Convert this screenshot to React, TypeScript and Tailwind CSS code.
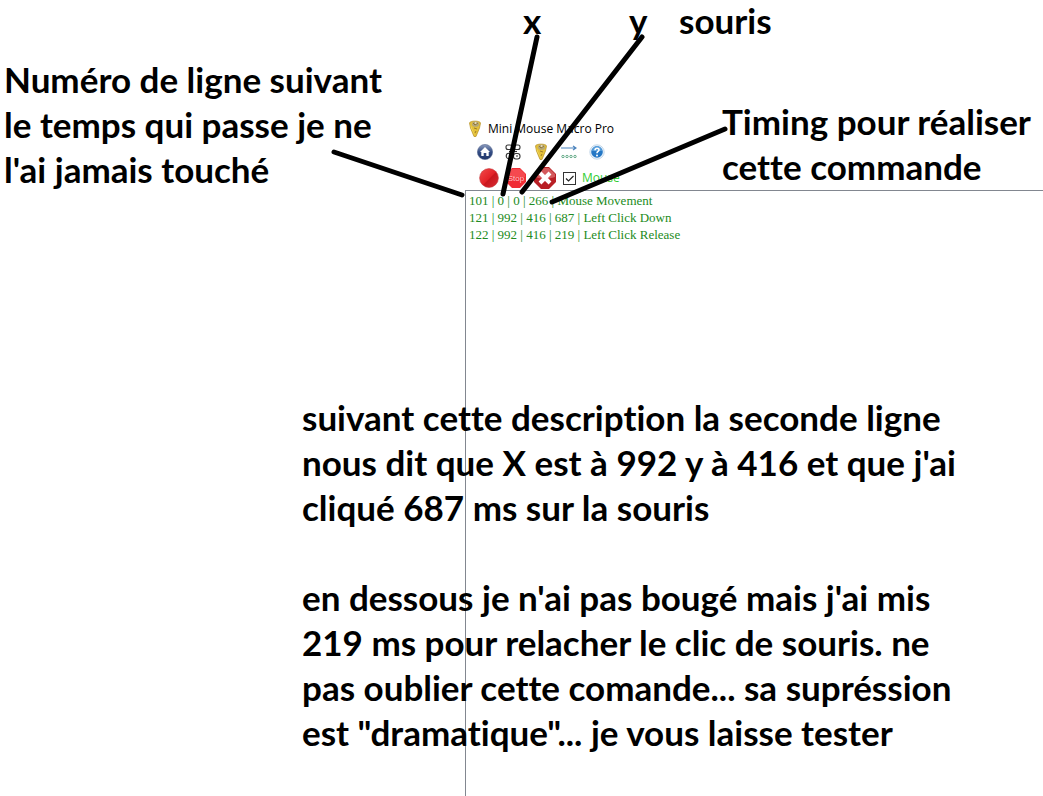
import React from "react";

const macroRows = [
  "101 | 0 | 0 | 266 | Mouse Movement",
  "121 | 992 | 416 | 687 | Left Click Down",
  "122 | 992 | 416 | 219 | Left Click Release",
];

function ConeIcon() {
  return (
    <svg viewBox="0 0 16 18" className="h-[18px] w-4" aria-hidden="true">
      <path d="M2.5 3C2.5 .5 13.5 .5 13.5 3L12.5 8L9 16.5H7L3.5 8Z" fill="#e3c03a" stroke="#b58e22" strokeWidth=".7" />
      <path d="M3.5 4C4 8 7 12 8 16L4 8Z" fill="#fae66d" />
      <ellipse cx="8.5" cy="4.2" rx="3.4" ry="2.6" fill="#b3a77b" />
      <path d="M6 3l2 2 3-2M7 8l3 1M9 11l-1 2" fill="none" stroke="#8a6b24" strokeWidth=".8" />
      <path d="M8 2l2 1-2 1" fill="#f2ead0" />
    </svg>
  );
}

function HomeIcon() {
  return (
    <svg viewBox="0 0 16 16" className="size-4" aria-hidden="true">
      <defs>
        <linearGradient id="home-fill" x1="0" y1="0" x2="0" y2="1">
          <stop stopColor="#8d9cbd" />
          <stop offset=".5" stopColor="#344d85" />
          <stop offset="1" stopColor="#203567" />
        </linearGradient>
      </defs>
      <circle cx="8" cy="8" r="7.6" fill="url(#home-fill)" stroke="#52658e" strokeWidth=".6" />
      <path d="M3 8l5-5 5 5h-1.3v4H9.3V9H6.7v3H4.3V8Z" fill="#fff" />
    </svg>
  );
}

function CommandIcon() {
  return (
    <svg viewBox="0 0 16 16" className="size-4" fill="#fff" stroke="#333" strokeWidth="1.1" aria-hidden="true">
      <rect x="1" y="1" width="6" height="4.5" rx="2" />
      <rect x="9" y="1" width="6" height="4.5" rx="2" />
      <path d="M4 7.5h8" />
      <circle cx="4" cy="12" r="2.8" />
      <rect x="8.5" y="9.5" width="6.5" height="5.5" rx="2.5" />
      <path d="M11 12h2" />
    </svg>
  );
}

function FlowIcon() {
  return (
    <svg viewBox="0 0 16 16" className="size-4" fill="none" aria-hidden="true">
      <path d="M0 4h14M12 2l3 2-3 2" stroke="#4b83bd" strokeWidth="1.2" />
      <g stroke="#55a17c" strokeWidth=".9">
        <circle cx="2" cy="12.5" r="1.2" />
        <circle cx="6" cy="12.5" r="1.2" />
        <circle cx="10" cy="12.5" r="1.2" />
        <circle cx="14" cy="12.5" r="1.2" />
      </g>
    </svg>
  );
}

function HelpIcon() {
  return (
    <svg viewBox="0 0 16 16" className="size-4" aria-hidden="true">
      <circle cx="8" cy="8" r="7.2" fill="#eaf3fb" stroke="#b9cfe3" strokeWidth=".8" />
      <circle cx="8" cy="8" r="5.8" fill="#2477c5" />
      <path d="M3 7a5 5 0 0 1 10 0Z" fill="#579edb" />
      <path d="M6 6.2C6.2 3.5 10 3.6 10 6C10 7.5 8 7.5 8 9.2" fill="none" stroke="#fff" strokeWidth="1.6" />
      <circle cx="8" cy="11.5" r="1" fill="#fff" />
    </svg>
  );
}

function RecordIcon() {
  return (
    <svg viewBox="0 0 20 20" className="size-5" aria-hidden="true">
      <defs>
        <linearGradient id="record-fill" x1="0" y1="0" x2="1" y2="1">
          <stop stopColor="#f24b4b" />
          <stop offset=".5" stopColor="#e32228" />
          <stop offset=".55" stopColor="#c9161d" />
          <stop offset="1" stopColor="#d92e34" />
        </linearGradient>
      </defs>
      <circle cx="10" cy="10" r="9.4" fill="url(#record-fill)" stroke="#c43a3e" strokeWidth=".6" />
    </svg>
  );
}

function StopIcon() {
  return (
    <svg viewBox="0 0 22 22" className="size-[22px]" aria-hidden="true">
      <path d="M7 1h8l6 6v8l-6 6H7l-6-6V7Z" fill="#f02c34" />
      <path d="M7 2h8l5 5v3H2V7Z" fill="#f5494f" />
      <text x="11" y="14" textAnchor="middle" fill="#ffc9c9" fontFamily="Liberation Sans, sans-serif" fontSize="8">Stop</text>
    </svg>
  );
}

function CloseIcon() {
  return (
    <svg viewBox="0 0 24 24" className="size-6" aria-hidden="true">
      <path d="M8 1h8l7 7v8l-7 7H8l-7-7V8Z" fill="#b81f25" />
      <path d="M8 2h8l6 6v3c-7 2-13 2-20 0V8Z" fill="#d4595c" />
      <path d="M7 7l10 10M17 7L7 17" stroke="#fff" strokeWidth="4" />
    </svg>
  );
}

function MacroWindow() {
  return (
    <main className="ml-[465px] flex min-h-screen flex-col pt-[119px]">
      <header className="flex h-[19px] items-center gap-1 pl-0.5 text-xs">
        <ConeIcon />
        <h1 className="pl-px">Mini Mouse Macro Pro</h1>
      </header>
      <nav className="flex h-7 items-center gap-3 pl-3" aria-label="Macro">
        <button type="button" aria-label="Home"><HomeIcon /></button>
        <button type="button" aria-label="Commands"><CommandIcon /></button>
        <button type="button" aria-label="Macro"><ConeIcon /></button>
        <button type="button" aria-label="Flow"><FlowIcon /></button>
        <button type="button" aria-label="Help"><HelpIcon /></button>
      </nav>
      <div className="flex h-6 items-center gap-1.5 pl-3.5">
        <button type="button" aria-label="Record"><RecordIcon /></button>
        <button type="button" aria-label="Stop"><StopIcon /></button>
        <button type="button" aria-label="Clear"><CloseIcon /></button>
        <label className="flex items-center gap-1.5 text-xs text-[#32cd32]">
          <span className="grid">
            <input type="checkbox" defaultChecked className="peer col-start-1 row-start-1 size-[13px] appearance-none border border-[#333] bg-white" />
            <svg viewBox="0 0 13 13" className="pointer-events-none invisible col-start-1 row-start-1 size-[13px] peer-checked:visible" aria-hidden="true">
              <path d="M3 6.5l2.5 2.5L10.5 4" fill="none" stroke="#222" strokeWidth="1.2" />
            </svg>
          </span>
          Mouse
        </label>
      </div>
      <ul className="flex-1 border-t border-l border-[#828790] pt-px pl-[3px] font-['Liberation_Serif',serif] text-[13px] leading-[17px] text-[#228b22]">
        {macroRows.map((row) => (
          <li key={row} className="whitespace-nowrap">{row}</li>
        ))}
      </ul>
    </main>
  );
}

function Note({ lines, className }: { lines: string[]; className: string }) {
  return (
    <p className={`absolute font-['Lato',sans-serif] text-[35px] leading-[45px] font-bold whitespace-nowrap [font-variant-ligatures:none] ${className}`}>
      {lines.map((line) => (
        <span key={line} className="block">{line}</span>
      ))}
    </p>
  );
}

export default function App() {
  return (
    <div className="relative min-h-screen overflow-hidden bg-white font-['Open_Sans',sans-serif] text-black">
      <MacroWindow />
      <Note className="-top-0.5 left-[523px]" lines={["x"]} />
      <Note className="-top-0.5 left-[629px]" lines={["y"]} />
      <Note className="-top-0.5 left-[679px]" lines={["souris"]} />
      <Note className="top-[57px] left-1" lines={["Numéro de ligne suivant", "le temps qui passe je ne", "l'ai jamais touché"]} />
      <Note className="top-[99px] left-[722px]" lines={["Timing pour réaliser", "cette commande"]} />
      <Note
        className="top-[395px] left-[302px]"
        lines={["suivant cette description la seconde ligne", "nous dit que X est à 992 y à 416 et que j'ai", "cliqué 687 ms sur la souris"]}
      />
      <Note
        className="top-[575px] left-[302px]"
        lines={["en dessous je n'ai pas bougé mais j'ai mis", "219 ms pour relacher le clic de souris. ne", "pas oublier cette comande... sa supréssion", "est \"dramatique\"... je vous laisse tester"]}
      />
      <svg
        width="1043"
        height="260"
        viewBox="0 0 1043 260"
        className="pointer-events-none absolute top-0 left-0 max-w-none"
        stroke="#000"
        strokeWidth="5"
        strokeLinecap="round"
        aria-hidden="true"
      >
        <path d="M537 37L503 194M642 37L522 192M725 129L552 202M334 152L462 195" />
      </svg>
    </div>
  );
}
